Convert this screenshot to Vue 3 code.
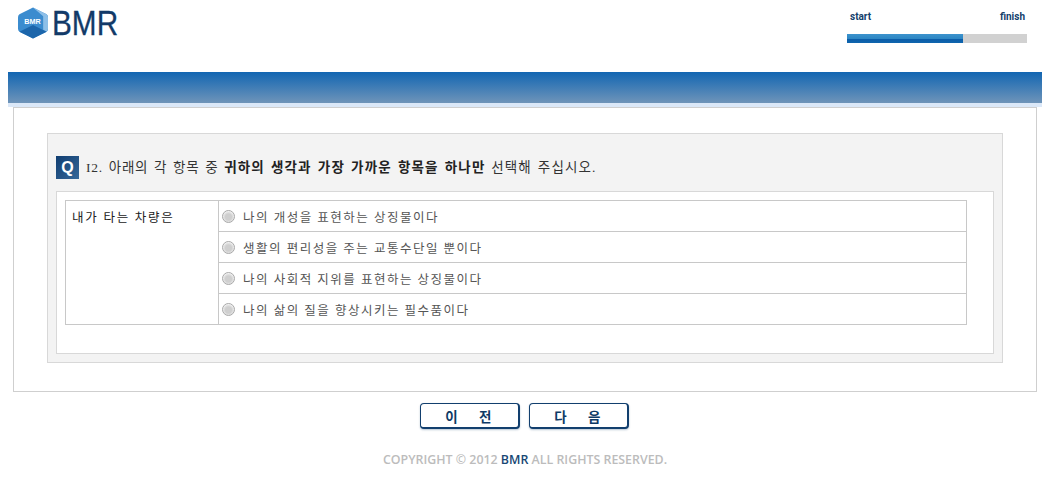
<script setup>
const options = [
  '나의 개성을 표현하는 상징물이다',
  '생활의 편리성을 주는 교통수단일 뿐이다',
  '나의 사회적 지위를 표현하는 상징물이다',
  '나의 삶의 질을 향상시키는 필수품이다'
]
</script>

<template>
  <div class="page">
    <header class="top">
      <div class="logo">
        <svg class="cube" width="30" height="32" viewBox="0 0 31 32">
          <path d="M15.5 0 L29.5 7 Q31 8 31 10 L31 22 Q31 24 29.5 25 L15.5 32 L1.5 25 Q0 24 0 22 L0 10 Q0 8 1.5 7 Z" fill="#3b8ccf" />
          <path d="M15.5 0 L29.5 7 Q31 8 31 10 L31 22 Q31 24 29.5 25 L26 23 L26 9 Z" fill="#8dbfe8" />
          <path d="M1.5 25 L15.5 18 L29.5 25 L15.5 32 Z" fill="#1c66ab" />
          <text x="15" y="17" text-anchor="middle" class="cube-text">BMR</text>
        </svg>
        <span class="logo-text">BMR</span>
      </div>
      <div class="progress">
        <div class="progress-labels"><span>start</span><span>finish</span></div>
        <div class="track"><div class="fill"></div></div>
      </div>
    </header>

    <div class="banner"></div>

    <main class="outer">
      <section class="panel">
        <h1 class="question">
          <span class="q">Q</span>
          <span class="qtext">I2. 아래의 각 항목 중 <b>귀하의 생각과 가장 가까운 항목을 하나만</b> <span class="tail">선택해 주십시오.</span></span>
        </h1>
        <div class="inner">
          <div class="table">
            <div class="label">내가 타는 차량은</div>
            <div class="opts">
              <label v-for="o in options" :key="o" class="opt">
                <span class="radio"></span>
                <span>{{ o }}</span>
              </label>
            </div>
          </div>
        </div>
      </section>
    </main>

    <nav class="buttons">
      <button class="btn">이&nbsp;&nbsp;&nbsp;&nbsp;&nbsp;&nbsp;전</button>
      <button class="btn">다&nbsp;&nbsp;&nbsp;&nbsp;&nbsp;&nbsp;음</button>
    </nav>

    <footer class="copy">COPYRIGHT © 2012 <span>BMR</span> ALL RIGHTS RESERVED.</footer>
  </div>
</template>

<style>
html, body { margin: 0; background: #fff; }
</style>

<style scoped>
.page {
  width: 1063px;
  height: 497px;
  overflow: hidden;
  box-sizing: border-box;
  font-family: "Liberation Serif", "Noto Sans CJK KR", serif;
  color: #555;
}
.top {
  height: 72px;
  display: flex;
  justify-content: space-between;
  padding: 7px 36px 0 18px;
  box-sizing: border-box;
}
.logo { display: flex; align-items: flex-start; height: 34px; }
.cube { display: block; }
.cube-text { font: bold 7.5px "Liberation Sans", sans-serif; fill: #fff; }
.logo-text {
  font: 35px/32px "Liberation Sans", sans-serif;
  color: #123a68;
  -webkit-text-stroke: 0.3px #123a68;
  margin-left: 4px;
  transform: scaleX(0.85);
  transform-origin: left center;
}
.progress { width: 180px; padding-top: 3px; }
.progress-labels {
  display: flex;
  justify-content: space-between;
  padding: 0 2px 0 3px;
  font: bold 10px/14px "Roboto", sans-serif;
  color: #13406b;
  margin-bottom: 10px;
}
.track { height: 9px; background: #d1d1d1; }
.fill {
  width: 116px;
  height: 9px;
  background: linear-gradient(#3c93cd 0, #2b85c3 55%, #0b5ca8 56%, #0f66ae 100%);
}
.banner {
  margin: 0 21px 0 8px;
  height: 31px;
  background: linear-gradient(#1266b2, #6f94b9);
  border-bottom: 4px solid #dbe8f8;
}
.outer {
  box-sizing: border-box;
  margin-left: 13px;
  width: 1024px;
  height: 285px;
  border: 1px solid #cfcfcf;
  padding: 25px 33px 0;
}
.panel {
  box-sizing: border-box;
  width: 956px;
  height: 230px;
  background: #f3f3f3;
  border: 1px solid #d8d8d8;
  padding: 0 8px;
}
.question {
  height: 57px;
  margin: 0;
  display: flex;
  align-items: flex-end;
  padding-bottom: 12px;
  box-sizing: border-box;
  font-size: 13.5px;
  font-weight: 400;
  color: #333;
}
.q {
  width: 23px;
  height: 23px;
  background: linear-gradient(135deg, #0f3d70, #37689a);
  color: #fff;
  font: bold 16px/23px "Liberation Sans", sans-serif;
  text-align: center;
  margin-right: 7px;
}
.qtext { line-height: 23px; letter-spacing: 0.78px; word-spacing: 1.6px; white-space: nowrap; }
.qtext b { font-weight: 700; color: #222; letter-spacing: 1.15px; }
.tail { letter-spacing: 1.1px; }
.inner {
  box-sizing: border-box;
  width: 938px;
  height: 163px;
  background: #fff;
  border: 1px solid #d8d8d8;
  padding: 8px;
}
.table {
  display: flex;
  width: 902px;
  height: 125px;
  box-sizing: border-box;
  border: 1px solid #c8c8c8;
}
.label {
  width: 153px;
  box-sizing: border-box;
  border-right: 1px solid #c8c8c8;
  padding: 9px 6px;
  font-size: 12.5px;
  line-height: 16px;
  color: #222;
  letter-spacing: 1.75px;
}
.opts { flex: 1; display: flex; flex-direction: column; }
.opt {
  height: 31px;
  display: flex;
  align-items: center;
  box-sizing: border-box;
  border-bottom: 1px solid #c8c8c8;
  padding-left: 3px;
  font-size: 12.5px;
  color: #555;
  letter-spacing: 1.5px;
}
.opt:last-child { border-bottom: 0; height: 30px; }
.radio {
  width: 11px;
  height: 11px;
  border-radius: 50%;
  border: 1px solid #a8a8a8;
  background: radial-gradient(circle at 50% 55%, #cfcfcf 0 38%, #e2e2e2 58%, #fdfdfd 76%, #d8d8d8 100%);
  margin-right: 8px;
  flex: none;
}
.buttons {
  display: flex;
  gap: 9px;
  margin: 11px 0 0 420px;
}
.btn {
  width: 100px;
  height: 26px;
  box-sizing: border-box;
  padding: 0 2px 0 0;
  border: 1px solid #123f6e;
  border-radius: 4px;
  border-bottom-width: 2px;
  border-right-width: 2px;
  background: #fff;
  color: #0e3a66;
  font: 700 13.5px/22px "Noto Sans CJK KR", sans-serif;
  letter-spacing: 0.4px;
  box-shadow: 0 1px 2px rgba(18, 63, 110, 0.3);
}
.copy {
  margin-top: 22px;
  margin-left: 383px;
  font: 600 12.4px/18px "Open Sans", sans-serif;
  color: #bcbcbc;
  white-space: nowrap;
}
.copy span { color: #174774; }
</style>
